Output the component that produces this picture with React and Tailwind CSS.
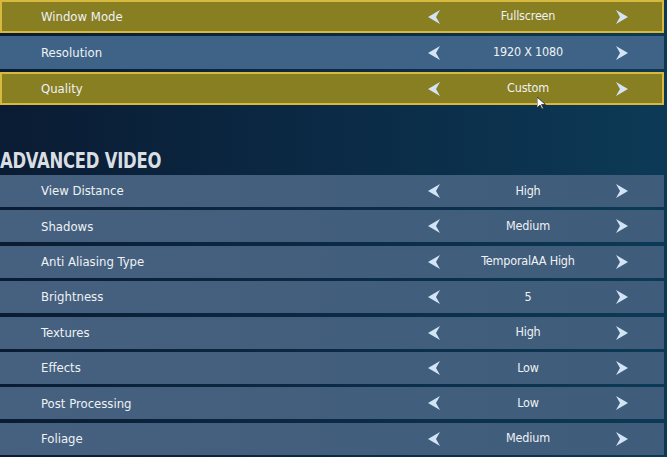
import React from "react";

const topRows = [
  { label: "Window Mode", value: "Fullscreen", active: true },
  { label: "Resolution", value: "1920 X 1080", active: false },
  { label: "Quality", value: "Custom", active: true },
];

const advancedRows = [
  { label: "View Distance", value: "High" },
  { label: "Shadows", value: "Medium" },
  { label: "Anti Aliasing Type", value: "TemporalAA High" },
  { label: "Brightness", value: "5" },
  { label: "Textures", value: "High" },
  { label: "Effects", value: "Low" },
  { label: "Post Processing", value: "Low" },
  { label: "Foliage", value: "Medium" },
];

const font = {
  fontFamily: '"DejaVu Sans Condensed", "Liberation Sans Narrow", Roboto, sans-serif',
};

const Arrow = ({ dir }) => (
  <svg width="13" height="16" viewBox="0 0 13 16" className="shrink-0">
    {dir === "left" ? (
      <polygon points="0,8 12,1 8,8 12,15" fill="#d3e4f5" />
    ) : (
      <polygon points="13,8 1,1 5,8 1,15" fill="#d3e4f5" />
    )}
  </svg>
);

const SettingRow = ({ label, value, variant }) => {
  const styles = {
    active: "h-[33px] bg-[#887e22] border-2 border-[#d9b83e]",
    blue: "h-[33px] bg-[#3e6387]",
    plain: "h-[32px] bg-gradient-to-r from-[#46617f] to-[#3f5c7b]",
  };
  return (
    <div
      className={`w-[664px] flex items-center text-[13px] text-[#eef2f5] ${styles[variant]}`}
      style={font}
    >
      <div className={`flex-1 ${variant === "active" ? "pl-[39px]" : "pl-[41px]"}`}>
        {label}
      </div>
      <div className={`w-[200px] flex items-center ${variant === "active" ? "mr-[34px]" : "mr-[36px]"}`}>
        <Arrow dir="left" />
        <div className="flex-1 text-center text-[12.5px] tracking-[-0.2px]">{value}</div>
        <Arrow dir="right" />
      </div>
    </div>
  );
};

export default function App() {
  return (
    <div className="relative w-[667px] h-[457px] overflow-hidden bg-gradient-to-r from-[#0a1c33] via-[#0b2a45] to-[#0c3a56]">
      <div className="flex flex-col gap-[3px]">
        {topRows.map((row) => (
          <SettingRow
            key={row.label}
            label={row.label}
            value={row.value}
            variant={row.active ? "active" : "blue"}
          />
        ))}
      </div>

      <h2
        className="mt-[42px] h-[28px] w-fit origin-left scale-x-[0.83] text-[22px] font-bold leading-[28px] text-[#d9dee3] tracking-[-0.3px]"
        style={font}
      >
        ADVANCED VIDEO
      </h2>

      <div className="flex flex-col gap-[3.4px]">
        {advancedRows.map((row) => (
          <SettingRow key={row.label} label={row.label} value={row.value} variant="plain" />
        ))}
      </div>

      {/* mouse pointer */}
      <svg
        className="absolute left-[537px] top-[97px]"
        width="9"
        height="13"
        viewBox="0 0 9 13"
      >
        <polygon points="0,0 0,11 3,8 5,12 6.5,11.3 4.5,7.5 8.5,7.5" fill="#ffffff" stroke="#222" strokeWidth="0.8" />
      </svg>
    </div>
  );
}
